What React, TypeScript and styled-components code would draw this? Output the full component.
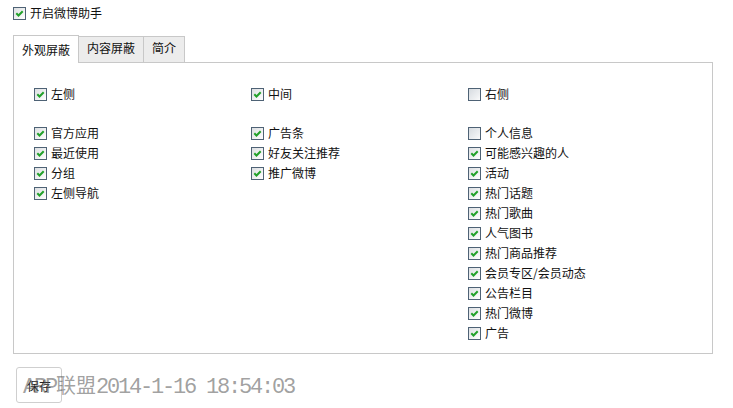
import React from "react";
import styled, { createGlobalStyle } from "styled-components";

const GlobalStyle = createGlobalStyle`
  html, body {
    margin: 0;
    padding: 0;
    background: #fff;
  }
  body {
    font-family: "Noto Sans CJK SC", sans-serif;
    font-size: 12px;
    color: #111;
  }
`;

const Page = styled.div`
  position: relative;
  width: 733px;
  height: 408px;
  box-sizing: border-box;
  padding: 6px 13px 0;
`;

const Option = styled.label`
  display: flex;
  align-items: center;
  gap: 4px;
  height: ${(p: { $h?: number }) => p.$h ?? 20}px;
  line-height: 14px;
  white-space: nowrap;
`;

const Box = styled.span<{ $checked: boolean }>`
  flex: none;
  width: 13px;
  height: 13px;
  box-sizing: border-box;
  border: 1px solid #4e6275;
  background: ${(p) =>
    p.$checked
      ? "linear-gradient(135deg, #dcdfe2 0%, #f4f5f6 70%, #fff 100%)"
      : "linear-gradient(135deg, #d6dbe0 0%, #eef0f2 70%, #fbfbfb 100%)"};
  display: inline-flex;
  align-items: center;
  justify-content: center;
  svg {
    display: block;
  }
`;

const Tabs = styled.div`
  display: flex;
  align-items: flex-end;
  height: 28px;
  margin-top: 15px;
  margin-bottom: -1px;
  position: relative;
  z-index: 1;
`;

const Tab = styled.div<{ $active?: boolean }>`
  box-sizing: border-box;
  border: 1px solid #c8c8c8;
  border-bottom: none;
  padding: ${(p) => (p.$active ? "7px 8px 0" : "4px 8px 0")};
  height: ${(p) => (p.$active ? 28 : 26)}px;
  margin-bottom: ${(p) => (p.$active ? 0 : 1)}px;
  background: ${(p) => (p.$active ? "#fff" : "#ececec")};
  line-height: 14px;
  position: relative;
  z-index: ${(p) => (p.$active ? 2 : 1)};
  & + & {
    margin-left: -1px;
  }
`;

const Panel = styled.div`
  box-sizing: border-box;
  width: 700px;
  height: 292px;
  border: 1px solid #c8c8c8;
  padding: 21px 0 0 20px;
`;

const Grid = styled.div`
  display: grid;
  grid-template-columns: 217px 217px 217px;
`;

const Column = styled.div`
  display: flex;
  flex-direction: column;
  margin-top: ${(p: { $top?: number }) => p.$top ?? 0}px;
`;

const SaveButton = styled.button`
  margin: 13px 0 0 3px;
  width: 46px;
  height: 36px;
  box-sizing: border-box;
  border: 1px solid #cfcfcf;
  border-radius: 3px;
  background: #fff;
  font-family: "Noto Sans CJK SC", sans-serif;
  font-size: 12px;
  color: #222;
  padding: 0;
`;

const Watermark = styled.div`
  position: absolute;
  left: 23px;
  top: 374px;
  font-family: "Liberation Mono", "Noto Sans CJK SC", monospace;
  font-size: 22px;
  line-height: 22px;
  letter-spacing: -2.2px;
  color: rgba(80, 80, 80, 0.55);
  white-space: nowrap;
  pointer-events: none;
  span {
    font-family: "Noto Sans CJK SC", sans-serif;
    font-size: 20px;
    letter-spacing: 0;
  }
`;

const Check: React.FC<{ checked: boolean; label: string; h?: number }> = ({
  checked,
  label,
  h,
}) => (
  <Option $h={h}>
    <Box $checked={checked}>
      {checked && (
        <svg width="9" height="9" viewBox="0 0 9 9">
          <polyline
            points="1.3,4.3 3.5,6.5 7.7,2.2"
            fill="none"
            stroke="#22a12a"
            strokeWidth="2"
          />
        </svg>
      )}
    </Box>
    {label}
  </Option>
);

const columns: [string, boolean][][] = [
  [
    ["官方应用", true],
    ["最近使用", true],
    ["分组", true],
    ["左侧导航", true],
  ],
  [
    ["广告条", true],
    ["好友关注推荐", true],
    ["推广微博", true],
  ],
  [
    ["个人信息", false],
    ["可能感兴趣的人", true],
    ["活动", true],
    ["热门话题", true],
    ["热门歌曲", true],
    ["人气图书", true],
    ["热门商品推荐", true],
    ["会员专区/会员动态", true],
    ["公告栏目", true],
    ["热门微博", true],
    ["广告", true],
  ],
];

const positions: [string, boolean][] = [
  ["左侧", true],
  ["中间", true],
  ["右侧", false],
];

export default function App() {
  return (
    <Page>
      <GlobalStyle />
      <Check checked label="开启微博助手" h={14} />
      <Tabs>
        <Tab $active>外观屏蔽</Tab>
        <Tab>内容屏蔽</Tab>
        <Tab>简介</Tab>
      </Tabs>
      <Panel>
        <Grid>
          {positions.map(([label, checked]) => (
            <Check key={label} label={label} checked={checked} />
          ))}
        </Grid>
        <Grid>
          {columns.map((col, i) => (
            <Column key={i} $top={19}>
              {col.map(([label, checked]) => (
                <Check key={label} label={label} checked={checked} />
              ))}
            </Column>
          ))}
        </Grid>
      </Panel>
      <SaveButton>保存</SaveButton>
      <Watermark>
        ARP<span>联盟</span>2014-1-16 18:54:03
      </Watermark>
    </Page>
  );
}
